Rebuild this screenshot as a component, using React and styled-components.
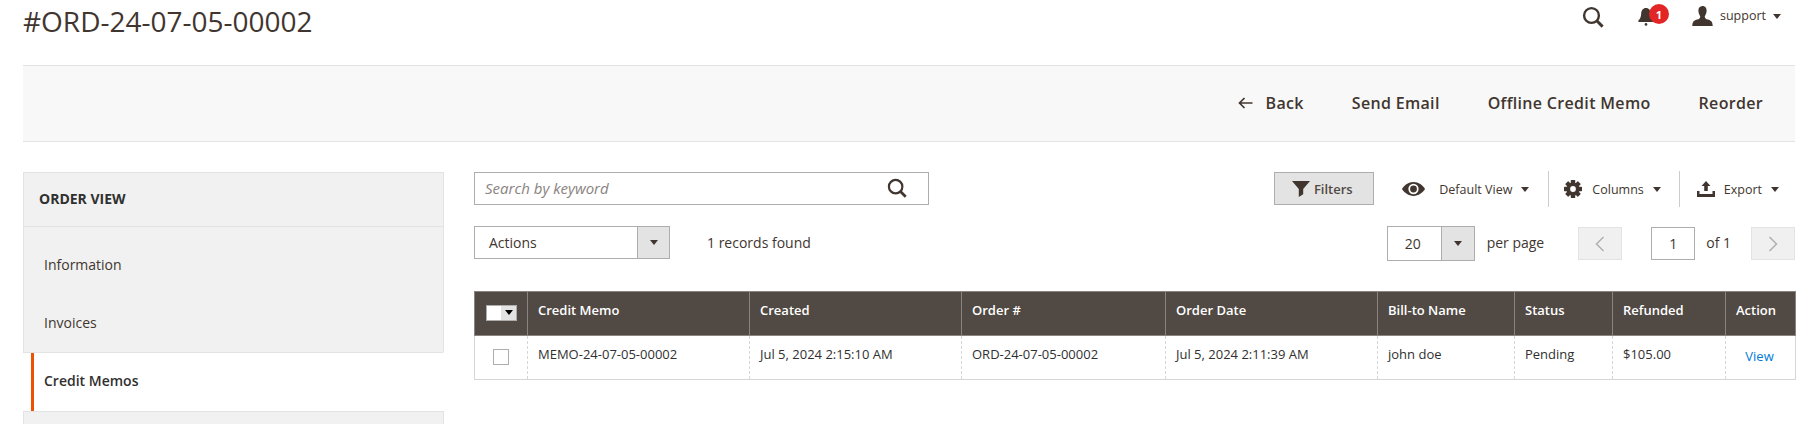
import React from "react";
import styled, { createGlobalStyle } from "styled-components";

const Global = createGlobalStyle`
  html, body { margin: 0; padding: 0; background: #fff; }
  body { font-family: "Open Sans", "Liberation Sans", sans-serif; color: #41362f; font-size: 14px; overflow: hidden; height: 424px; }
  * { box-sizing: border-box; }
`;
const Page = styled.div`padding: 0 23px; width: 1818px; height: 424px; overflow: hidden;`;
const Header = styled.header`display: flex; justify-content: space-between; height: 65px;`;
const Title = styled.h1`margin: 3px 0 0; font-size: 28px; line-height: 36px; font-weight: 400; color: #41362f;`;
const HeaderTools = styled.div`display: flex; align-items: flex-start; padding-top: 6px; margin-right: 14px;`;
const ToolIcon = styled.span`display: flex; position: relative; margin-left: ${p => p.$ml || 0}px; color: #41362f;`;
const Badge = styled.span`
  position: absolute; left: 11px; top: -2px; width: 20px; height: 20px; border-radius: 50%;
  background: #e22626; color: #fff; font-size: 11px; font-weight: 700; display: flex; align-items: center; justify-content: center;
`;
const UserName = styled.span`font-size: 12.5px; line-height: 20px; margin-left: 7px; color: #41362f;`;
const Caret = styled.span`
  display: inline-block; width: 0; height: 0; border-left: 4.5px solid transparent; border-right: 4.5px solid transparent;
  border-top: 5px solid ${p => p.$color || "#41362f"}; margin-left: ${p => p.$ml ?? 9}px;
`;
const ActionBar = styled.div`
  height: 77px; background: #f8f8f8; border-top: 1px solid #e3e3e3; border-bottom: 1px solid #e3e3e3;
  display: flex; justify-content: flex-end; align-items: center; padding: 0 32px 2px 0; gap: 48px;
`;
const BarButton = styled.span`font-size: 16px; font-weight: 600; color: #41362f; display: flex; align-items: center; letter-spacing: .32px;`;
const Body = styled.div`display: flex; margin-top: 30px; gap: 30px;`;
const Side = styled.aside`width: 421px; flex: none;`;
const SideHead = styled.div`
  height: 55px; background: #f1f1f1; border: 1px solid #e3e3e3; display: flex; align-items: center; padding-left: 15px;
  font-size: 14px; font-weight: 700; color: #303030; padding-bottom: 2px;
`;
const SideGroup = styled.div`background: #f1f1f1; border: 1px solid #e3e3e3; border-top: 0; height: 126px; padding-top: 8px; border-radius: 0 0 2px 0;`;
const SideItem = styled.div`height: 58px; display: flex; align-items: center; padding-left: 20px; font-size: 14px; color: #41362f;`;
const SideActive = styled.div`
  height: 58px; margin-left: 8px; border-left: 3px solid #eb5202; background: #fff; display: flex; align-items: center;
  padding: 0 0 3px 10px; font-size: 14px; font-weight: 600; color: #303030;
`;
const SideRest = styled.div`height: 30px; background: #f1f1f1; border: 1px solid #e3e3e3; border-bottom: 0;`;
const Main = styled.main`flex: 1; min-width: 0;`;
const Row = styled.div`display: flex; align-items: flex-start; justify-content: space-between; height: 33px;`;
const Cluster = styled.div`display: flex; align-items: flex-start;`;
const SearchBox = styled.div`
  width: 455px; height: 33px; border: 1px solid #adadad; display: flex; align-items: center; justify-content: space-between;
  padding: 0 21px 2px 10px; font-style: italic; font-size: 15px; color: #8a837f;
`;
const FilterButton = styled.div`
  width: 100px; height: 33px; background: #e3e3e3; border: 1px solid #adadad; display: flex; align-items: center; justify-content: center;
  font-size: 13px; font-weight: 600; color: #514943; gap: 4px; padding-right: 4px;
`;
const ViewCtl = styled.div`
  display: flex; align-items: center; height: 36px; margin-top: -1px; font-size: 12.5px; color: #41362f;
  padding: 0 ${p => p.$pr ?? 18}px 0 ${p => p.$pl ?? 15}px;
  border-left: ${p => p.$sep ? "1px solid #cccccc" : "0"};
`;
const ViewLabel = styled.span`margin-left: ${p => p.$ml ?? 10}px;`;
const SecondRow = styled(Row)`margin-top: 21px; height: 35px;`;
const SelectBox = styled.div`
  width: ${p => p.$w}px; height: ${p => p.$h || 33}px; border: 1px solid #adadad; display: flex; font-size: 14px; color: #41362f;
`;
const SelectText = styled.span`flex: 1; display: flex; align-items: center; padding-left: ${p => p.$pl}px;`;
const SelectBtn = styled.span`
  width: ${p => p.$w}px; background: #e3e3e3; border-left: 1px solid #adadad; display: flex; align-items: center; justify-content: center;
`;
const Records = styled.span`margin-left: 37px; font-size: 14px; line-height: 33px; color: #41362f;`;
const PerPage = styled.span`margin-left: 12px; font-size: 14px; line-height: 33px;`;
const PageBtn = styled.span`
  width: 44px; height: 33px; margin-top: 1px; background: #f0f0f0; border: 1px solid #e3e3e3; display: flex; align-items: center; justify-content: center;
  margin-left: ${p => p.$ml}px; color: #adadad;
`;
const PageInput = styled.span`
  width: 44px; height: 33px; margin-top: 1px; border: 1px solid #adadad; display: flex; align-items: center; justify-content: center; margin-left: 29px; font-size: 14px;
`;
const OfText = styled.span`margin-left: 11px; font-size: 14px; line-height: 33px;`;
const Table = styled.table`
  margin-top: 30px; width: 1321px; table-layout: fixed; border-collapse: collapse; font-size: 13px;
`;
const Th = styled.th`
  background: #514943; color: #fff; font-weight: 600; text-align: left; height: 44px; padding: 0 10px 8px;
  border: 1px solid #8a837f; font-size: 13px;
`;
const Td = styled.td`
  height: 44px; padding: 0 10px 7px; border-left: 1px dashed #d6d6d6; border-right: 1px dashed #d6d6d6;
  border-bottom: 1px solid #d6d6d6; color: #303030; font-size: 13px;
  &:first-child { border-left: 1px solid #d6d6d6; }
  &:last-child { border-right: 1px solid #d6d6d6; }
`;
const CheckCell = styled(Td)`padding: 0 0 3px; text-align: center;`;
const CheckTh = styled(Th)`padding: 0 0 3px;`;
const MultiSelect = styled.span`
  display: flex; width: 31px; height: 16px; margin: 1px 0 0 11px; background: #fff; border: 1px solid #adadad;
`;
const MultiBtn = styled.span`
  margin-left: auto; width: 15px; background: #e3e3e3; display: flex; align-items: center; justify-content: center;
`;
const CheckBox = styled.span`display: inline-block; width: 16px; height: 16px; border: 1px solid #adadad; vertical-align: middle; background: #fff;`;
const ViewLink = styled.a`color: #007bdb; display: block; text-align: center; padding: 4px 2px 0 0; font-size: 13px;`;

const SearchIcon = ({ s = 22 }) => (
  <svg width={s} height={s} viewBox="0 0 22 22" fill="none" stroke="#41362f" strokeWidth="2.4">
    <circle cx="9.5" cy="9.5" r="7.4" /><path d="M14.8 14.8 L20.6 20.6" strokeWidth="3" />
  </svg>
);
const Bell = () => (
  <svg width="16" height="20" viewBox="0 0 16 20" fill="#41362f">
    <path d="M8 2C5 2 3.4 4.4 3.2 7.5 3 11 2.2 12.8.4 14.6V16h15.2v-1.4C13.8 12.8 13 11 12.8 7.5 12.6 4.4 11 2 8 2Z" /><circle cx="8" cy="18.4" r="1.3" />
  </svg>
);
const User = () => (
  <svg width="21" height="20" viewBox="0 0 21 20" fill="#41362f">
    <path d="M10.5 0C7.6 0 6.2 2.2 6.4 5c.2 2.400 1 4 1.900 5.400-.2 1.600-1.100 2.500-3.200 3.200C2.300 14.500.5 15.300.3 20h20.400c-.2-4.700-2-5.500-4.800-6.400-2.100-.7-3-1.600-3.200-3.200.9-1.400 1.700-3 1.900-5.400.2-2.800-1.200-5-4.100-5Z" />
  </svg>
);
const ArrowLeft = () => (
  <svg width="15" height="12" viewBox="0 0 15 12" fill="none" stroke="#41362f" strokeWidth="1.7" style={{ marginRight: 13 }}>
    <path d="M14.500 6H1.500M6.500 1 1.500 6l5 5" />
  </svg>
);
const Funnel = () => (
  <svg width="18" height="16" viewBox="0 0 18 16" fill="#41362f"><path d="M0 0h18L11.200 8v5.200L6.800 16V8Z" /></svg>
);
const Eye = () => (
  <svg width="23" height="14" viewBox="0 0 25 15">
    <path fill="#41362f" d="M12.500 0C7 0 2.600 3.400 0 7.500 2.600 11.600 7 15 12.500 15S22.400 11.600 25 7.500C22.400 3.400 18 0 12.500 0Z" />
    <circle cx="12.500" cy="7.500" r="5.600" fill="#fff" /><circle cx="12.500" cy="7.500" r="3.700" fill="#41362f" />
  </svg>
);
const Gear = () => (
  <svg width="18" height="18" viewBox="0 0 18 18">
    <g fill="#41362f">
      {[0, 45, 90, 135].map(a => <rect key={a} x="6.800" y="0" width="4.400" height="18" rx=".6" transform={`rotate(${a} 9 9)`} />)}
      <circle cx="9" cy="9" r="6.600" />
    </g>
    <circle cx="9" cy="9" r="2.900" fill="#fff" />
  </svg>
);
const Upload = () => (
  <svg width="18" height="16" viewBox="0 0 18 16" fill="#41362f">
    <path d="M9 0l4.500 5H10.800v5H7.200V5H4.500Z" /><path d="M0 10h2.500v3h13v-3H18v6H0Z" />
  </svg>
);
const Chevron = ({ left }) => (
  <svg width="10" height="16" viewBox="0 0 10 16" fill="none" stroke="#adadad" strokeWidth="1.400">
    <path d={left ? "M8.500 1 1.500 8l7 7" : "M1.500 1l7 7-7 7"} />
  </svg>
);

const cols = [53, 222, 212, 204, 212, 137, 98, 113, 70];
const headers = ["Credit Memo", "Created", "Order #", "Order Date", "Bill-to Name", "Status", "Refunded", "Action"];
const cells = ["MEMO-24-07-05-00002", "Jul 5, 2024 2:15:10 AM", "ORD-24-07-05-00002", "Jul 5, 2024 2:11:39 AM", "john doe", "Pending", "$105.00"];

export default function App() {
  return (
    <Page>
      <Global />
      <Header>
        <Title>#ORD-24-07-05-00002</Title>
        <HeaderTools>
          <ToolIcon><SearchIcon /></ToolIcon>
          <ToolIcon $ml={34}><Bell /><Badge>1</Badge></ToolIcon>
          <ToolIcon $ml={38}><User /></ToolIcon>
          <UserName>support</UserName>
          <Caret $ml={7} style={{ marginTop: 8 }} />
        </HeaderTools>
      </Header>
      <ActionBar>
        <BarButton><ArrowLeft />Back</BarButton>
        <BarButton>Send Email</BarButton>
        <BarButton>Offline Credit Memo</BarButton>
        <BarButton>Reorder</BarButton>
      </ActionBar>
      <Body>
        <Side>
          <SideHead>ORDER VIEW</SideHead>
          <SideGroup>
            <SideItem>Information</SideItem>
            <SideItem>Invoices</SideItem>
          </SideGroup>
          <SideActive>Credit Memos</SideActive>
          <SideRest />
        </Side>
        <Main>
          <Row>
            <SearchBox>Search by keyword<SearchIcon s={20} /></SearchBox>
            <Cluster>
              <FilterButton><Funnel />Filters</FilterButton>
              <ViewCtl $pl={28} $pr={19}><Eye /><ViewLabel $ml={14}>Default View</ViewLabel><Caret /></ViewCtl>
              <ViewCtl $sep><Gear /><ViewLabel>Columns</ViewLabel><Caret /></ViewCtl>
              <ViewCtl $sep $pl={17} $pr={16}><Upload /><ViewLabel $ml={9}>Export</ViewLabel><Caret /></ViewCtl>
            </Cluster>
          </Row>
          <SecondRow>
            <Cluster>
              <SelectBox $w={196}>
                <SelectText $pl={14}>Actions</SelectText>
                <SelectBtn $w={32}><Caret $ml={0} /></SelectBtn>
              </SelectBox>
              <Records>1 records found</Records>
            </Cluster>
            <Cluster>
              <SelectBox $w={88} $h={35}>
                <SelectText $pl={17}>20</SelectText>
                <SelectBtn $w={33}><Caret $ml={0} /></SelectBtn>
              </SelectBox>
              <PerPage>per page</PerPage>
              <PageBtn $ml={34}><Chevron left /></PageBtn>
              <PageInput>1</PageInput>
              <OfText>of 1</OfText>
              <PageBtn $ml={20}><Chevron /></PageBtn>
            </Cluster>
          </SecondRow>
          <Table>
            <colgroup>{cols.map((c, i) => <col key={i} style={{ width: c }} />)}</colgroup>
            <thead>
              <tr>
                <CheckTh>
                  <MultiSelect><MultiBtn><Caret $ml={0} $color="#000" /></MultiBtn></MultiSelect>
                </CheckTh>
                {headers.map(h => <Th key={h}>{h}</Th>)}
              </tr>
            </thead>
            <tbody>
              <tr>
                <CheckCell><CheckBox /></CheckCell>
                {cells.map(c => <Td key={c}>{c}</Td>)}
                <Td><ViewLink>View</ViewLink></Td>
              </tr>
            </tbody>
          </Table>
        </Main>
      </Body>
    </Page>
  );
}
